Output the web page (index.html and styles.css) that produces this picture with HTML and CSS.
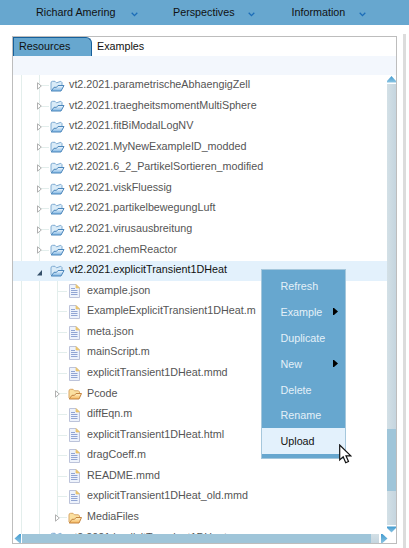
FILE: index.html
```html
<!DOCTYPE html>
<html lang="en">
<head>
<meta charset="utf-8">
<title>Resources</title>
<link rel="stylesheet" href="styles.css">
</head>
<body>
<svg class="defs" aria-hidden="true">
  <defs>
    <linearGradient id="blue" x1="0" y1="0" x2="0" y2="1"><stop offset="0" stop-color="#f4faff"/><stop offset="1" stop-color="#7db4e2"/></linearGradient>
    <linearGradient id="gold" x1="0" y1="0" x2="0" y2="1"><stop offset="0" stop-color="#fff3c8"/><stop offset="1" stop-color="#f5b65c"/></linearGradient>
    <linearGradient id="arrow" x1="0" y1="0" x2="0" y2="1"><stop offset="0" stop-color="#429bd0"/><stop offset="1" stop-color="#8bc4e2"/></linearGradient>
    <symbol id="folder" viewBox="0 0 15 12">
      <path d="M1 10V3Q1 1.3 2.5 1.3H5L6.5 2.8L10.8 1.3L12 2.5V5" fill="#d9ebf8" stroke="#7fabd2"/>
      <path d="M1.2 11L4 7.3H6.5L8 5.5H14L11 11Z" fill="url(#blue)" stroke="#4b86bb"/>
    </symbol>
    <symbol id="goldfolder" viewBox="0 0 15 12">
      <path d="M1 10V3Q1 1.3 2.5 1.3H5L6.5 2.8H10.5L11.5 4V6" fill="#fbe0a0" stroke="#d9a766"/>
      <path d="M1.2 11L4 7.3H6.5L8 5.5H13.5L11 11Z" fill="url(#gold)" stroke="#c48440"/>
    </symbol>
    <symbol id="file" viewBox="0 0 11 14">
      <path d="M.5 .5H7L10.5 4V13.5H.5Z" fill="#eef3fc" stroke="#bcc3da"/>
      <path d="M7 .5L10.5 4H7Z" fill="#f2ca69" stroke="#e3bd6e" stroke-width=".7"/>
      <path d="M2 4.5H6M2 6.5H8.5M2 8.5H8.5M2 10.5H8.5" stroke="#91a5d3"/>
    </symbol>
    <symbol id="closed" viewBox="0 0 5 8"><path d="M.5 .8V7.2L4.3 4Z" fill="#fff" stroke="#b0b0b0"/></symbol>
    <symbol id="open" viewBox="0 0 5 6"><path d="M5 0V5.5H0Z" fill="#35506a"/></symbol>
    <symbol id="chevron" viewBox="0 0 7 5"><path d="M.7 .8L3.5 3.6L6.3 .8" fill="none" stroke="#1c6db8" stroke-width="1.3"/></symbol>
  </defs>
</svg>

<header class="menubar">
  <div class="menu m1">Richard Amering<svg class="chev"><use href="#chevron"/></svg></div>
  <div class="menu m2">Perspectives<svg class="chev"><use href="#chevron"/></svg></div>
  <div class="menu m3">Information<svg class="chev"><use href="#chevron"/></svg></div>
</header>

<main class="main">
  <section class="panel">
    <nav class="tabs"><div class="tab active">Resources</div><div class="tab">Examples</div></nav>
    <div class="toolbar"></div>
    <div class="view">
      <div class="tree">
        <div class="row"><svg class="tw"><use href="#closed"/></svg><svg class="folder"><use href="#folder"/></svg><span>vt2.2021.parametrischeAbhaengigZell</span></div>
        <div class="row"><svg class="tw"><use href="#closed"/></svg><svg class="folder"><use href="#folder"/></svg><span>vt2.2021.traegheitsmomentMultiSphere</span></div>
        <div class="row"><svg class="tw"><use href="#closed"/></svg><svg class="folder"><use href="#folder"/></svg><span>vt2.2021.fitBiModalLogNV</span></div>
        <div class="row"><svg class="tw"><use href="#closed"/></svg><svg class="folder"><use href="#folder"/></svg><span>vt2.2021.MyNewExampleID_modded</span></div>
        <div class="row"><svg class="tw"><use href="#closed"/></svg><svg class="folder"><use href="#folder"/></svg><span>vt2.2021.6_2_PartikelSortieren_modified</span></div>
        <div class="row"><svg class="tw"><use href="#closed"/></svg><svg class="folder"><use href="#folder"/></svg><span>vt2.2021.viskFluessig</span></div>
        <div class="row"><svg class="tw"><use href="#closed"/></svg><svg class="folder"><use href="#folder"/></svg><span>vt2.2021.partikelbewegungLuft</span></div>
        <div class="row"><svg class="tw"><use href="#closed"/></svg><svg class="folder"><use href="#folder"/></svg><span>vt2.2021.virusausbreitung</span></div>
        <div class="row"><svg class="tw"><use href="#closed"/></svg><svg class="folder"><use href="#folder"/></svg><span>vt2.2021.chemReactor</span></div>
        <div class="row selected"><svg class="tw opened"><use href="#open"/></svg><svg class="folder"><use href="#folder"/></svg><span>vt2.2021.explicitTransient1DHeat</span></div>
        <div class="row child"><i class="tw"></i><svg class="file"><use href="#file"/></svg><span>example.json</span></div>
        <div class="row child"><i class="tw"></i><svg class="file"><use href="#file"/></svg><span>ExampleExplicitTransient1DHeat.m</span></div>
        <div class="row child"><i class="tw"></i><svg class="file"><use href="#file"/></svg><span>meta.json</span></div>
        <div class="row child"><i class="tw"></i><svg class="file"><use href="#file"/></svg><span>mainScript.m</span></div>
        <div class="row child"><i class="tw"></i><svg class="file"><use href="#file"/></svg><span>explicitTransient1DHeat.mmd</span></div>
        <div class="row child"><svg class="tw"><use href="#closed"/></svg><svg class="folder"><use href="#goldfolder"/></svg><span>Pcode</span></div>
        <div class="row child"><i class="tw"></i><svg class="file"><use href="#file"/></svg><span>diffEqn.m</span></div>
        <div class="row child"><i class="tw"></i><svg class="file"><use href="#file"/></svg><span>explicitTransient1DHeat.html</span></div>
        <div class="row child"><i class="tw"></i><svg class="file"><use href="#file"/></svg><span>dragCoeff.m</span></div>
        <div class="row child"><i class="tw"></i><svg class="file"><use href="#file"/></svg><span>README.mmd</span></div>
        <div class="row child"><i class="tw"></i><svg class="file"><use href="#file"/></svg><span>explicitTransient1DHeat_old.mmd</span></div>
        <div class="row child"><svg class="tw"><use href="#closed"/></svg><svg class="folder"><use href="#goldfolder"/></svg><span>MediaFiles</span></div>
        <div class="row last"><svg class="tw"><use href="#closed"/></svg><svg class="folder"><use href="#folder"/></svg><span>vt2.2021.implicitTransient1DHeat</span></div>
      </div>
      <div class="vbar">
        <svg class="va" viewBox="0 0 9 7"><path d="M4.5 0L9 5V6.5H0V5Z" fill="url(#arrow)"/></svg>
        <div class="vtrack"><div class="vthumb"></div></div>
        <svg class="va" viewBox="0 0 9 7"><path d="M0 .5H9V2L4.5 6.5L0 2Z" fill="url(#arrow)"/></svg>
      </div>
    </div>
    <div class="hbar">
      <svg class="ha" viewBox="0 0 7 9"><path d="M7 0V9H5.5L.5 4.5L5.5 0Z" fill="url(#arrow)"/></svg>
      <div class="htrack"><div class="hthumb"></div></div>
      <svg class="ha" viewBox="0 0 7 9"><path d="M0 0V9H1.5L6.5 4.5L1.5 0Z" fill="url(#arrow)"/></svg>
    </div>
  </section>
  <div class="splitter"></div>
</main>

<div class="context">
  <div class="item">Refresh</div>
  <div class="item">Example<svg class="sub" viewBox="0 0 5 7"><path d="M0 0H1L5 3.5L1 7H0Z"/></svg></div>
  <div class="item">Duplicate</div>
  <div class="item">New<svg class="sub" viewBox="0 0 5 7"><path d="M0 0H1L5 3.5L1 7H0Z"/></svg></div>
  <div class="item">Delete</div>
  <div class="item">Rename</div>
  <div class="item hover">Upload</div>
</div>
<svg class="cursor" viewBox="0 0 13 20"><path d="M.7 1V16L4.2 12.8L6.7 18.7L9.5 17.5L7 11.8H11.8Z" fill="#fff" stroke="#111" stroke-width="1.2"/></svg>
</body>
</html>
```

FILE: styles.css
```css
* { box-sizing: border-box; }
body {
  margin: 0;
  width: 409px;
  height: 548px;
  overflow: hidden;
  background: #fff;
  color: #111;
  font: 10.76px/20px "Liberation Sans", Arial, sans-serif;
}
svg { display: block; flex: none; }
.defs { position: absolute; width: 0; height: 0; }
.menubar {
  display: flex;
  height: 25px;
  background: #67a7cf;
  line-height: 25px;
}
.menu { display: flex; align-items: center; justify-content: space-between; }
.m1 { width: 102px; margin-left: 36px; }
.m2 { width: 82px; margin-left: 35px; }
.m3 { width: 74px; margin-left: 36.5px; }
.chev { width: 7px; height: 5px; margin-top: 3px; }
.main { display: flex; height: 523px; padding-left: 12px; }
.panel {
  width: 385px;
  height: 508px;
  margin-top: 11px;
  border: 1px solid #bdbdbd;
  display: flex;
  flex-direction: column;
}
.tabs { display: flex; height: 19px; line-height: 19px; }
.tab { padding-left: 5px; }
.tab.active {
  width: 79px;
  background: #67a7cf;
  border: 1px solid #17609b;
  border-bottom: 0;
  border-radius: 0 6px 0 0;
  line-height: 17px;
}
.toolbar { height: 19px; background: #f3f7fd; }
.view { display: flex; height: 459px; overflow: hidden; }
.tree {
  width: 374px;
  color: #555;
  background:
    linear-gradient(#e3eeec, #e3eeec) 8px 0 / 1px 100% no-repeat,
    linear-gradient(#e3eeec, #e3eeec) 26px 0 / 1px 100% no-repeat,
    linear-gradient(#e3eeec, #e3eeec) 44px 206px / 1px 237px no-repeat;
}
.row {
  display: flex;
  align-items: center;
  height: 20.57px;
  padding-left: 24px;
  white-space: nowrap;
  background: linear-gradient(#e3eeec, #e3eeec) 27px 10px / 9px 1px no-repeat;
}
.row.child {
  padding-left: 42px;
  background-position: 45px 10px;
}
.row.selected { background: linear-gradient(#e3f1fc, #e3f1fc) 0 1px no-repeat; color: #111; }
.row span { margin-top: -2.4px; }
.row.last span { margin-top: -1px; }
.tw { width: 5px; height: 8px; margin: 1px 8px 0 0; flex: none; }
.tw.opened { height: 6px; margin-top: 6px; }
.folder { width: 15px; height: 12px; margin: 1px 4px 0 0; }
.file { width: 11px; height: 14px; margin: 1px 7px 0 1px; }
.vbar {
  width: 9px;
  display: flex;
  flex-direction: column;
  justify-content: space-between;
  padding: 1px 0;
}
.va { width: 9px; height: 7px; }
.vtrack {
  height: 441px;
  padding-top: 345px;
  background: linear-gradient(90deg, #d3e0e6, #c5d5df);
}
.vthumb { height: 62px; background: #9fc5d9; }
.hbar { display: flex; height: 9px; padding-left: 1px; gap: 1px; }
.ha { width: 7px; height: 9px; }
.htrack { width: 357px; margin-right: 1px; background: linear-gradient(#d3e0e6, #c5d5df); }
.hthumb { width: 349px; height: 9px; background: #9fc5d9; }
.splitter { width: 3px; margin: 9px 0 0 6px; background: #dcdcdc; }
.context {
  position: absolute;
  left: 261px;
  top: 269px;
  width: 85px;
  height: 190px;
  padding-top: 3px;
  border: 1px solid #a5c7dc;
  background: #67a7cf;
  color: #e4f0f8;
}
.item {
  display: flex;
  align-items: center;
  justify-content: space-between;
  height: 26px;
  padding: 0 7px 0 18.5px;
}
.item:nth-child(-n+6) { height: 25.92px; }
.item.hover { background: #e3f1fc; color: #111; }
.sub { width: 5px; height: 7px; fill: #000; }
.cursor { position: absolute; left: 339px; top: 444px; width: 13px; height: 20px; }
```
